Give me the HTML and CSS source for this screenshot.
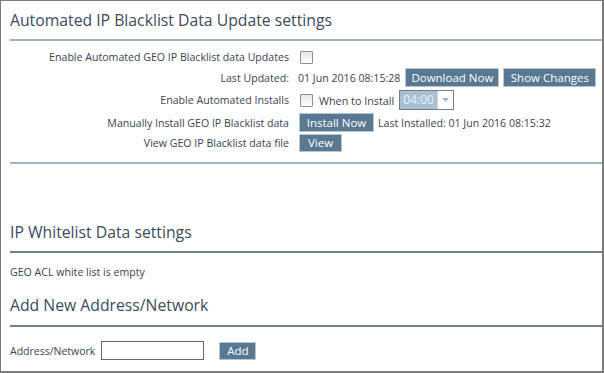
FILE: index.html
```html
<!DOCTYPE html>
<html>
<head>
<meta charset="utf-8">
<link rel="stylesheet" href="styles.css">
</head>
<body>
<div class="frame">
  <h2 class="title t1">Automated IP Blacklist Data Update settings</h2>
  <div class="rule light"></div>
  <div class="form">
    <div class="lbl">Enable Automated GEO IP Blacklist data Updates</div>
    <div class="ctl"><span class="cb"></span></div>
    <div class="lbl">Last Updated:</div>
    <div class="ctl"><span class="txt">01 Jun 2016 08:15:28</span><span class="btn b-dl">Download Now</span><span class="btn b-sc">Show Changes</span></div>
    <div class="lbl">Enable Automated Installs</div>
    <div class="ctl"><span class="cb"></span><span class="txt wti">When to Install</span><span class="sel"><span class="selv">04:00</span><span class="sela"><svg width="9" height="6" viewBox="0 0 9 6"><path d="M1 1 L8 1 L4.5 5 Z" fill="#a9b4bf"/></svg></span></span></div>
    <div class="lbl">Manually Install GEO IP Blacklist data</div>
    <div class="ctl"><span class="btn b-in">Install Now</span><span class="txt">Last Installed: 01 Jun 2016 08:15:32</span></div>
    <div class="lbl">View GEO IP Blacklist data file</div>
    <div class="ctl"><span class="btn b-v">View</span></div>
  </div>
  <div class="rule light"></div>
  <h2 class="title t2">IP Whitelist Data settings</h2>
  <div class="rule dark"></div>
  <p class="note">GEO ACL white list is empty</p>
  <h2 class="title t3">Add New Address/Network</h2>
  <div class="rule dark"></div>
  <div class="addrow">
    <span class="note2">Address/Network</span>
    <span class="inp"></span>
    <span class="btn b-add">Add</span>
  </div>
</div>
</body>
</html>
```
FILE: styles.css
```css
html, body { margin: 0; padding: 0; background: #fff; }
body { font-family: "Open Sans", "DejaVu Sans", sans-serif; color: #3a4350; }
.frame {
  box-sizing: border-box;
  width: 604px; height: 373px;
  border: 1px solid #7b7b7b;
  border-width: 1px 2px 2px 1px;
  padding-left: 9px;
  overflow: hidden;
}
.title {
  margin: 0; font-weight: normal; font-size: 15.75px; color: #3c4b5c;
  line-height: 20px;
}
.t1 { padding-top: 9px; padding-bottom: 9px; }
.t2 { padding-top: 58px; padding-bottom: 9px; }
.t3 { padding-top: 17px; padding-bottom: 10px; }
.rule { height: 2px; }
.rule.light { background: #a3b3c2; }
.rule.dark { background: #71808f; }
.form {
  display: grid;
  grid-template-columns: 279px 1fr;
  grid-template-rows: 20px 21px 24px 21px 19px;
  column-gap: 9px;
  padding-top: 6px;
  padding-bottom: 10px;
  font-size: 10.6px;
}
.lbl { text-align: right; color: #3a4350; display: flex; align-items: center; justify-content: flex-end; white-space: nowrap; }
.ctl { display: flex; align-items: center; gap: 4px; }
.cb {
  box-sizing: border-box; width: 13px; height: 13px;
  border: 1px solid #8f8f8f; border-radius: 1px;
  background: linear-gradient(#e6e6e6, #fdfdfd);
  margin-left: 2px;
}
.txt { color: #3a4350; white-space: nowrap; }
.wti { margin-left: 2px; margin-right: 1px; font-size: 10.8px; }
.btn {
  box-sizing: border-box; display: inline-flex; align-items: center; justify-content: center;
  height: 19px; padding: 0 6px;
  background: #587991; color: #fff; font-size: 11.5px;
  border: 1px solid #b7c6d2;
  white-space: nowrap;
}
.b-dl { margin-left: 1px; width: 94px; }
.b-sc { width: 93px; }
.b-in { width: 75px; margin-left: 1px; }
.b-v { width: 43px; height: 18px; margin-left: 1px; }
.sel {
  box-sizing: border-box; display: inline-flex; height: 20px; width: 55px;
  border: 1px solid #737d87; background: #a9c0d4;
}
.selv { flex: 1; color: #e6eef5; font-size: 12px; line-height: 18px; padding-left: 3px; }
.sela { width: 15px; background: #fff; display: flex; align-items: center; justify-content: center; border-left: 1px solid #d0d6dc; }
.note { margin: 0; padding-top: 13px; font-size: 10.6px; line-height: 12px; color: #3a4350; }
.note2 { font-size: 10.5px; color: #3a4350; }
.addrow { display: flex; align-items: center; padding-top: 14px; }
.inp {
  box-sizing: border-box; width: 103px; height: 19px;
  border: 1px solid #5a6978; background: #fff; margin-left: 6px;
}
.b-add { margin-left: 15px; height: 18px; width: 37px; padding: 0; font-size: 11.5px; }
```
